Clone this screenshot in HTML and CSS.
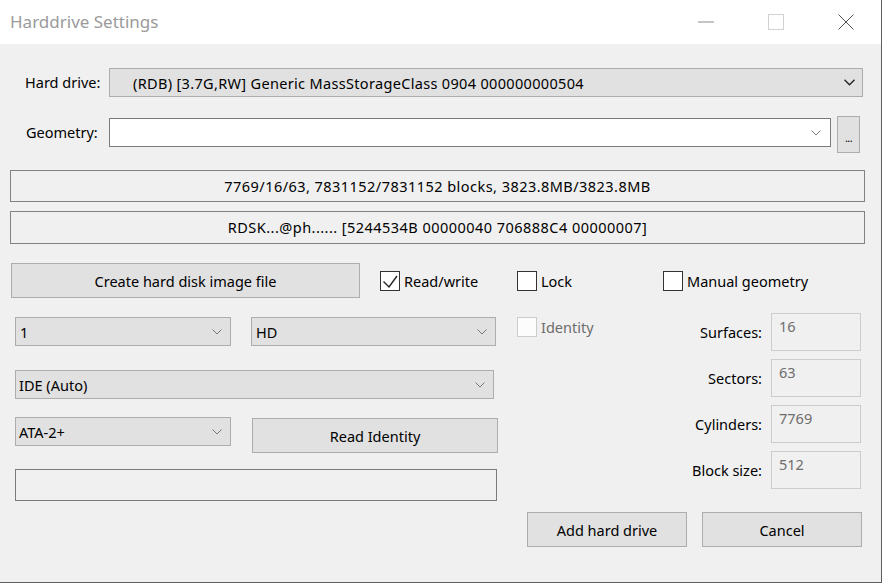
FILE: index.html
```html
<!DOCTYPE html>
<html>
<head>
<meta charset="utf-8">
<title>Harddrive Settings</title>
<link rel="stylesheet" href="styles.css">
</head>
<body>
<div class="window">
  <div class="titlebar">
    <span class="title">Harddrive Settings</span>
    <div class="caption">
      <div class="cap-btn"><svg width="16" height="15" viewBox="0 0 16 15"><line x1="0" y1="7" x2="16" y2="7" stroke="#8a8a8a" stroke-width="1"/></svg></div>
      <div class="cap-btn"><svg width="16" height="16" viewBox="0 0 16 16"><rect x="0.5" y="0.5" width="15" height="15" fill="none" stroke="#d2d2d2" stroke-width="1"/></svg></div>
      <div class="cap-btn"><svg width="16" height="16" viewBox="0 0 16 16"><path d="M0.5 0.5 L15.5 15.5 M15.5 0.5 L0.5 15.5" stroke="#555" stroke-width="1" fill="none"/></svg></div>
    </div>
  </div>

  <div class="content">
    <div class="row-drive">
      <span class="lbl">Hard drive:</span>
      <div class="combo combo-drive">
        <span class="combo-text">(RDB) [3.7G,RW] Generic MassStorageClass 0904 000000000504</span>
        <svg class="chev" width="11" height="7" viewBox="0 0 11 7"><polyline points="0.5,0.8 5.5,5.8 10.5,0.8" fill="none" stroke="#222" stroke-width="1.3"/></svg>
      </div>
    </div>

    <div class="row-geom">
      <span class="lbl">Geometry:</span>
      <div class="edit-combo">
        <svg class="chev" width="10" height="6" viewBox="0 0 10 6"><polyline points="0.5,0.5 5,5 9.5,0.5" fill="none" stroke="#7a7a7a" stroke-width="1"/></svg>
      </div>
      <button class="btn btn-dots">...</button>
    </div>

    <div class="info info-1">7769/16/63, 7831152/7831152 blocks, 3823.8MB/3823.8MB</div>
    <div class="info info-2">RDSK...@ph...... [5244534B 00000040 706888C4 00000007]</div>

    <div class="main">
      <div class="left">
        <div class="l-row-a">
          <button class="btn btn-create">Create hard disk image file</button>
          <div class="check check-rw">
            <span class="box"><svg width="18" height="18" viewBox="0 0 18 18"><polyline points="2.5,9.5 8,15 16,4" fill="none" stroke="#222" stroke-width="1.4"/></svg></span>
            <span class="check-label">Read/write</span>
          </div>
        </div>
        <div class="l-row-b">
          <div class="combo dd dd-unit"><span class="combo-text">1</span><svg class="chev" width="10" height="6" viewBox="0 0 10 6"><polyline points="0.5,0.5 5,5 9.5,0.5" fill="none" stroke="#777" stroke-width="1"/></svg></div>
          <div class="combo dd dd-type"><span class="combo-text">HD</span><svg class="chev" width="10" height="6" viewBox="0 0 10 6"><polyline points="0.5,0.5 5,5 9.5,0.5" fill="none" stroke="#777" stroke-width="1"/></svg></div>
        </div>
        <div class="l-row-c">
          <div class="combo dd dd-ctrl"><span class="combo-text">IDE (Auto)</span><svg class="chev" width="10" height="6" viewBox="0 0 10 6"><polyline points="0.5,0.5 5,5 9.5,0.5" fill="none" stroke="#777" stroke-width="1"/></svg></div>
        </div>
        <div class="l-row-d">
          <div class="combo dd dd-ata"><span class="combo-text">ATA-2+</span><svg class="chev" width="10" height="6" viewBox="0 0 10 6"><polyline points="0.5,0.5 5,5 9.5,0.5" fill="none" stroke="#777" stroke-width="1"/></svg></div>
          <button class="btn btn-identity">Read Identity</button>
        </div>
        <div class="l-row-e">
          <div class="textbox"></div>
        </div>
      </div>

      <div class="right">
        <div class="r-row-a">
          <div class="check check-lock">
            <span class="box"></span>
            <span class="check-label">Lock</span>
          </div>
          <div class="check">
            <span class="box"></span>
            <span class="check-label">Manual geometry</span>
          </div>
        </div>
        <div class="r-row-b">
          <div class="check check-identity disabled">
            <span class="box"></span>
            <span class="check-label">Identity</span>
          </div>
          <div class="fields">
            <span class="f-lbl">Surfaces:</span><div class="f-box">16</div>
            <span class="f-lbl">Sectors:</span><div class="f-box">63</div>
            <span class="f-lbl">Cylinders:</span><div class="f-box">7769</div>
            <span class="f-lbl">Block size:</span><div class="f-box">512</div>
          </div>
        </div>
        <div class="r-row-c">
          <button class="btn btn-action">Add hard drive</button>
          <button class="btn btn-action">Cancel</button>
        </div>
      </div>
    </div>
  </div>
</div>
</body>
</html>
```

FILE: styles.css
```css
* { box-sizing: border-box; }

body {
  margin: 0;
  background: #5e5e5e;
  font-family: "Noto Sans", "Open Sans", sans-serif;
  font-size: 14.5px;
  color: #000;
}

.window {
  width: 881px;
  height: 582px;
  background: #f0f0f0;
  display: flex;
  flex-direction: column;
  overflow: hidden;
}

/* title bar */
.titlebar {
  height: 44px;
  flex: none;
  background: #fff;
  display: flex;
  align-items: center;
}
.title {
  padding-left: 10px;
  font-size: 17px;
  line-height: 44px;
  color: #9a9a9a;
}
.caption {
  margin-left: auto;
  display: flex;
  height: 44px;
}
.cap-btn {
  width: 70px;
  height: 44px;
  display: flex;
  align-items: center;
  justify-content: center;
}

/* content */
.content {
  display: flex;
  flex-direction: column;
  padding-top: 24px;
}

.lbl { line-height: 29px; }

.combo {
  height: 29px;
  border: 1px solid #adadad;
  background: #e1e1e1;
  display: flex;
  align-items: center;
}
.combo-text { flex: 1; white-space: nowrap; line-height: 20px; }
.chev { flex: none; display: block; }

.row-drive {
  display: flex;
  align-items: center;
  padding-left: 25px;
  height: 29px;
}
.row-drive .lbl { width: 84px; }
.combo-drive {
  width: 754px;
  padding-left: 23px;
  padding-right: 7px;
}
.combo-drive .combo-text { letter-spacing: 0.33px; }

.row-geom {
  display: flex;
  align-items: flex-start;
  margin-top: 19px;
  padding-left: 26px;
}
.row-geom .lbl { width: 83px; margin-top: 2px; }
.edit-combo {
  width: 722px;
  height: 29px;
  margin-top: 2px;
  border: 1px solid #7a7a7a;
  background: #fff;
  display: flex;
  align-items: center;
  justify-content: flex-end;
  padding-right: 9px;
}

.btn {
  font-family: inherit;
  font-size: 14.5px;
  color: #000;
  border: 1px solid #adadad;
  background: #e1e1e1;
  padding: 0;
  margin: 0;
  line-height: 20px;
}
.btn-dots {
  margin-left: 6px;
  width: 23px;
  height: 37px;
  font-size: 11px;
  letter-spacing: -0.6px;
  padding-top: 6px;
}

.info {
  margin-left: 10px;
  width: 855px;
  border: 1px solid #828282;
  text-align: center;
  line-height: 20px;
  padding-top: 5px;
  letter-spacing: 0.46px;
}
.info-1 { margin-top: 17px; height: 32px; }
.info-2 { margin-top: 9px; height: 33px; }

.main {
  display: flex;
  margin-top: 19px;
}

/* left column */
.left {
  width: 517px;
  flex: none;
  padding-left: 11px;
  display: flex;
  flex-direction: column;
}
.l-row-a {
  display: flex;
  align-items: center;
  height: 35px;
}
.btn-create { width: 349px; height: 35px; }
.check-rw { margin-left: 20px; }

.dd { padding-left: 4px; padding-right: 8px; }
.l-row-b {
  display: flex;
  gap: 20px;
  margin-top: 19px;
  padding-left: 4px;
}
.dd-unit { width: 216px; }
.dd-type { width: 245px; }

.l-row-c { margin-top: 24px; padding-left: 4px; }
.dd-ctrl { width: 479px; padding-left: 3px; }

.l-row-d {
  display: flex;
  align-items: flex-start;
  margin-top: 18px;
  padding-left: 4px;
}
.dd-ata { width: 216px; padding-left: 3px; }
.btn-identity {
  margin-left: 21px;
  margin-top: 1px;
  width: 246px;
  height: 35px;
}

.l-row-e { margin-top: 16px; padding-left: 4px; }
.textbox {
  width: 482px;
  height: 32px;
  border: 1px solid #7a7a7a;
  background: #f0f0f0;
}

/* checkboxes */
.check {
  display: flex;
  align-items: center;
}
.box {
  width: 20px;
  height: 20px;
  border: 1px solid #333;
  background: #fff;
  flex: none;
  display: flex;
  align-items: center;
  justify-content: center;
}
.box svg { display: block; }
.check-label {
  margin-left: 4px;
  line-height: 20px;
  white-space: nowrap;
}
.check.disabled .box { border-color: #cccccc; background: #fcfcfc; }
.check.disabled .check-label { color: #6d6d6d; }

/* right column */
.right {
  flex: 1;
  display: flex;
  flex-direction: column;
}
.r-row-a {
  display: flex;
  align-items: center;
  height: 35px;
}
.check-lock { width: 146px; }

.r-row-b {
  display: flex;
  align-items: flex-start;
  margin-top: 15px;
}
.check-identity { margin-top: 4px; }

.fields {
  margin-left: auto;
  margin-right: 20px;
  display: grid;
  grid-template-columns: auto 90px;
  column-gap: 9px;
  row-gap: 8px;
  align-items: center;
}
.f-lbl { justify-self: end; line-height: 20px; }
.f-box {
  height: 38px;
  border: 1px solid #cccccc;
  background: #f0f0f0;
  color: #6d6d6d;
  padding: 2px 7px 0;
  line-height: 20px;
}

.r-row-c {
  display: flex;
  justify-content: flex-end;
  gap: 15px;
  margin-top: 23px;
  padding-right: 19px;
}
.btn-action { width: 160px; height: 35px; }
```
